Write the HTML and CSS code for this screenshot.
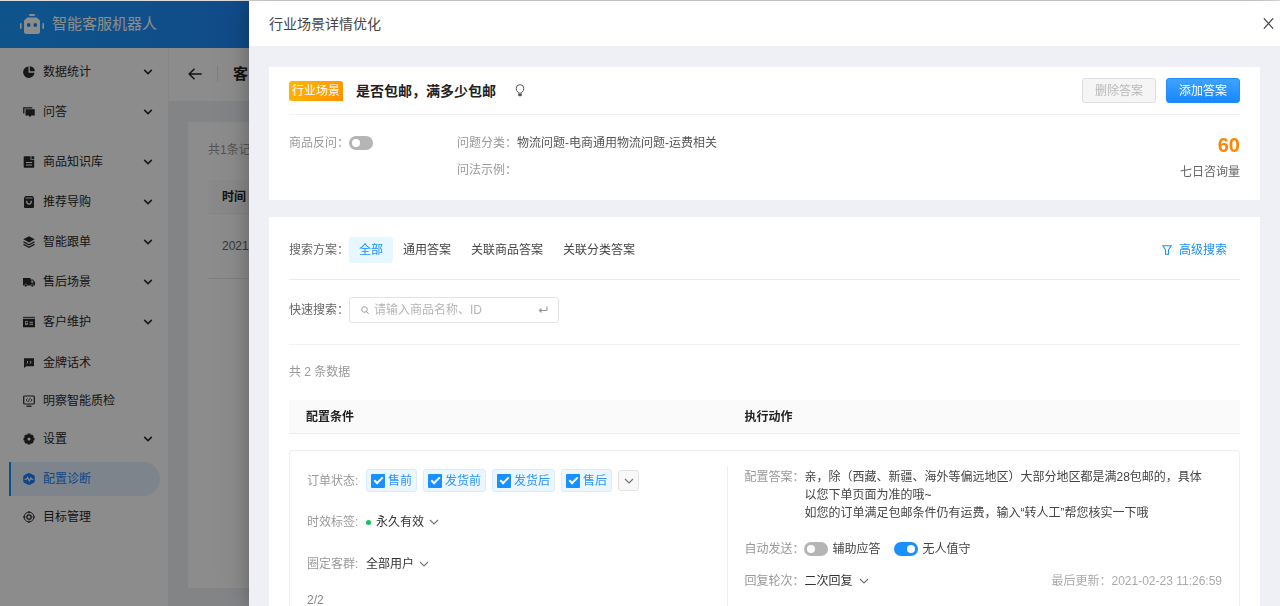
FILE: index.html
```html
<!DOCTYPE html>
<html lang="zh-CN">
<head>
<meta charset="utf-8">
<title>智能客服机器人</title>
<link rel="stylesheet" href="styles.css">
</head>
<body>
<svg class="symbols" aria-hidden="true">
  <symbol id="chevron" viewBox="0 0 10 6"><path d="M1 1l4 4 4-4" fill="none" stroke="currentColor" stroke-width="1.2"/></symbol>
  <symbol id="chevron-bold" viewBox="0 0 10 6"><path d="M1.2 .9L5 4.6 8.8.9" fill="none" stroke="currentColor" stroke-width="1.5"/></symbol>
</svg>
<div class="app">
  <header class="topbar">
    <svg class="logo" viewBox="0 0 24 20" aria-hidden="true"><g fill="#fff"><rect x="9" y="0" width="6" height="2" rx="1"/><rect x="6" y="3.500" width="12" height="3" rx="1.500"/><rect x="4" y="5" width="16" height="15" rx="2.500"/><rect x="0" y="9" width="1.600" height="6" rx=".8"/><rect x="22.400" y="9" width="1.600" height="6" rx=".8"/></g><circle cx="8.700" cy="11" r="1.900" fill="#1b8cf5"/><circle cx="15.300" cy="11" r="1.900" fill="#1b8cf5"/></svg>
    <span class="brand">智能客服机器人</span>
  </header>
  <div class="shell">
    <nav class="sidebar">
      <div class="nav-group">
        <a class="nav-item" href="#"><svg viewBox="0 0 12 12"><path d="M5.500.5A5.700 5.700 0 1 0 11.500 6.700H5.500z" fill="currentColor"/><path d="M6.800.3v5h5A5.300 5.300 0 0 0 6.800.3z" fill="currentColor"/></svg><span>数据统计</span><svg class="caret"><use href="#chevron-bold"/></svg></a>
        <a class="nav-item" href="#"><svg viewBox="0 0 12 12"><path d="M.8 7.500V1.800h8.500" fill="none" stroke="currentColor" stroke-width="1.300"/><path d="M2.500 3.200h9.200v6.300H8.200L7 11.300 5.800 9.500H2.500z" fill="currentColor"/></svg><span>问答</span><svg class="caret"><use href="#chevron-bold"/></svg></a>
      </div>
      <div class="nav-group">
        <a class="nav-item" href="#"><svg viewBox="0 0 12 12"><path fill-rule="evenodd" d="M1.500.2h6v3.600h3.700V11q0 .8-.8.8H1.500q-.8 0-.8-.8V1q0-.8.800-.8zM3 6v1h6V6zm0 2.500v1h6v-1z" fill="currentColor"/><path d="M8.400.2h2q.8 0 .8.8v2H8.400z" fill="currentColor"/></svg><span>商品知识库</span><svg class="caret"><use href="#chevron-bold"/></svg></a>
        <a class="nav-item" href="#"><svg viewBox="0 0 12 12"><path d="M2.300.1h7.400l1.300 2v9q0 .8-.8.800H1.800q-.8 0-.8-.8v-9z" fill="currentColor"/><path d="M2.500 2h7" stroke="#fff" stroke-width=".9"/><path d="M3.700 4.800q0 3.400 2.300 3.400t2.300-3.400" fill="none" stroke="#fff" stroke-width="1.300"/></svg><span>推荐导购</span><svg class="caret"><use href="#chevron-bold"/></svg></a>
        <a class="nav-item" href="#"><svg viewBox="0 0 12 12"><path d="M6 .2l5.700 3.100L6 6.400.3 3.300z" fill="currentColor"/><path d="M.5 5.900L6 8.800l5.500-2.900M.5 8.400L6 11.300l5.500-2.900" fill="none" stroke="currentColor" stroke-width="1.200"/></svg><span>智能跟单</span><svg class="caret"><use href="#chevron-bold"/></svg></a>
        <a class="nav-item" href="#"><svg viewBox="0 0 12 12"><path fill-rule="evenodd" d="M0 2h7.500v1.500h2.400L12 6v3.500H0zM8.300 4.500v2h2.500L9.500 4.500z" fill="currentColor"/><circle cx="2.800" cy="9.500" r="1.400" fill="currentColor" stroke="#fff" stroke-width=".5"/><circle cx="9.300" cy="9.500" r="1.400" fill="currentColor" stroke="#fff" stroke-width=".5"/></svg><span>售后场景</span><svg class="caret"><use href="#chevron-bold"/></svg></a>
        <a class="nav-item" href="#"><svg viewBox="0 0 12 12"><path d="M0 .8h12v1.500H0z" fill="currentColor" opacity=".8"/><path fill-rule="evenodd" d="M0 3h12v8.300H0zM2 5v3.700h3V5zm4.500.7v1H10v-1zm0 2v1H10v-1z" fill="currentColor"/><circle cx="3.600" cy="6.500" r="1.100" fill="currentColor"/></svg><span>客户维护</span><svg class="caret"><use href="#chevron-bold"/></svg></a>
      </div>
      <div class="nav-group">
        <a class="nav-item" href="#"><svg viewBox="0 0 12 12"><path d="M1 1.300h10v8H3.200L1 11z" fill="currentColor"/><path d="M4.500 4v1.500q0 1-.8 1.200M7.700 4v1.500q0 1-.8 1.200" fill="none" stroke="#fff"/></svg><span>金牌话术</span></a>
        <a class="nav-item short" href="#"><svg viewBox="0 0 12 12"><rect x=".7" y="1" width="10.600" height="8" rx=".8" fill="none" stroke="currentColor" stroke-width="1.200"/><path d="M3.500 11.200h5" stroke="currentColor" stroke-width="1.300"/><path d="M4.600 3.500L3 5l1.600 1.700M7.400 3.500L9 5 7.400 6.700M6.500 3.300L5.500 6.900" fill="none" stroke="currentColor" stroke-width=".8"/></svg><span>明察智能质检</span></a>
        <a class="nav-item" href="#"><svg viewBox="0 0 12 12"><path fill-rule="evenodd" d="M4.700.5h2.600l.4 1.400 1.400-.4 1.600 1.700-.5 1.300 1.300.4v2.300l-1.300.5.4 1.400L9 10.700l-1.300-.5-.4 1.400H4.700l-.4-1.400-1.400.5-1.700-1.700.5-1.300L.5 7.200V4.900l1.200-.4-.5-1.400 1.700-1.600 1.400.4zM6 4.500a1.500 1.500 0 1 0 0 3 1.500 1.500 0 0 0 0-3z" fill="currentColor"/></svg><span>设置</span><svg class="caret"><use href="#chevron-bold"/></svg></a>
        <a class="nav-item active" href="#" aria-current="page"><svg viewBox="0 0 12 12"><path d="M6 0q.8 0 1.500.5l3.400 1.800q.9.600.9 1.600v4.200q0 1-.9 1.600L7.500 11.500q-1.500.9-3 0L1.100 9.700Q.2 9.100.2 8.100V3.900q0-1 .9-1.600L4.500.5Q5.200 0 6 0z" fill="currentColor"/><path d="M1.500 6.200h2l1-1.700 1.800 3.400 1.500-3 .9 1.300h1.800" fill="none" stroke="#fff" stroke-width="1.100"/></svg><span>配置诊断</span></a>
        <a class="nav-item short" href="#"><svg viewBox="0 0 12 12"><circle cx="6" cy="6" r="4.900" fill="none" stroke="currentColor"/><circle cx="6" cy="6" r="2.200" fill="none" stroke="currentColor" stroke-width="1.300"/><path d="M6 0v2.500M6 9.500V12M0 6h2.500M9.500 6H12" stroke="currentColor"/></svg><span>目标管理</span></a>
      </div>
    </nav>
    <main class="main">
      <div class="page-head">
        <button class="back" aria-label="返回"><svg viewBox="0 0 14 12"><path d="M6.500.7L1.200 6l5.300 5.300M1.200 6h12.500" fill="none" stroke="currentColor" stroke-width="1.500"/></svg></button>
        <h1 class="page-title">客</h1>
      </div>
      <section class="records">
        <p class="records-count">共1条记</p>
        <table class="records-table">
          <thead><tr><th>时间</th></tr></thead>
          <tbody><tr><td>2021-</td></tr></tbody>
        </table>
      </section>
    </main>
  </div>
</div>
<div class="mask"></div>

<aside class="drawer" role="dialog" aria-labelledby="drawer-title">
  <header class="drawer-head">
    <h2 class="drawer-title" id="drawer-title">行业场景详情优化</h2>
    <button class="close" aria-label="关闭"><svg viewBox="0 0 10 10"><path d="M.8.300l8.400 9.400M9.200.300L.8 9.700" fill="none" stroke="currentColor" stroke-width="1.100"/></svg></button>
  </header>
  <div class="drawer-body">
    <section class="card">
      <div class="scene-head">
        <span class="tag">行业场景</span>
        <h3 class="scene-title">是否包邮，满多少包邮</h3>
        <svg class="bulb" viewBox="0 0 9 12" aria-hidden="true"><path d="M3 8.400V7.700Q1 6.500 1 4.200A3.500 3.600 0 0 1 8 4.200Q8 6.500 6 7.700v.7z" fill="none" stroke="currentColor" stroke-width=".9"/><path d="M2.800 9h3.400v1.500l-.9.900H3.700l-.9-.9z" fill="currentColor"/></svg>
        <div class="actions">
          <button class="btn" disabled>删除答案</button>
          <button class="btn primary">添加答案</button>
        </div>
      </div>
      <div class="scene-info">
        <div class="info-ask"><label class="muted" for="ask">商品反问：</label><input class="switch" type="checkbox" role="switch" id="ask"></div>
        <dl class="info-list">
          <div><dt>问题分类：</dt><dd>物流问题-电商通用物流问题-运费相关</dd></div>
          <div><dt>问法示例：</dt><dd></dd></div>
        </dl>
        <div class="stat"><strong>60</strong><span>七日咨询量</span></div>
      </div>
    </section>

    <section class="card">
      <div class="filter-row plans">
        <span class="label">搜索方案：</span>
        <div class="tabs">
          <button class="tab selected">全部</button><button class="tab">通用答案</button><button class="tab">关联商品答案</button><button class="tab">关联分类答案</button>
        </div>
        <a class="advanced" href="#"><svg viewBox="0 0 10 10" aria-hidden="true"><path d="M.8.800h8.400L6.500 4.800v4.400h-3V4.800z" fill="none" stroke="currentColor" stroke-width="1.100"/></svg>高级搜索</a>
      </div>
      <div class="filter-row quick">
        <label class="label" for="quick">快速搜索：</label>
        <div class="search">
          <svg viewBox="0 0 8 8" aria-hidden="true"><circle cx="3.500" cy="3.500" r="2.800" fill="none" stroke="currentColor"/><path d="M5.500 5.500L7.700 7.700" stroke="currentColor"/></svg>
          <input id="quick" type="text" placeholder="请输入商品名称、ID">
          <svg viewBox="0 0 10 8" aria-hidden="true"><path d="M8.900.5v4H2.500" fill="none" stroke="currentColor" stroke-width="1.100"/><path d="M3.500 1.800v5.400L.5 4.500z" fill="currentColor"/></svg>
        </div>
      </div>
      <p class="count">共 2 条数据</p>
      <table class="rules">
        <thead><tr><th>配置条件</th><th>执行动作</th></tr></thead>
        <tbody>
          <tr>
            <td class="cond">
              <div class="field status"><span class="muted">订单状态:</span>
                <div class="chips">
                  <label class="chip"><input type="checkbox" checked>售前</label>
                  <label class="chip"><input type="checkbox" checked>发货前</label>
                  <label class="chip"><input type="checkbox" checked>发货后</label>
                  <label class="chip"><input type="checkbox" checked>售后</label>
                  <button class="more" aria-label="更多"><svg><use href="#chevron"/></svg></button>
                </div>
              </div>
              <div class="field"><label class="muted" for="valid">时效标签:</label><i class="dot"></i><span class="pick"><select id="valid"><option>永久有效</option></select><svg><use href="#chevron"/></svg></span></div>
              <div class="field"><label class="muted" for="crowd">圈定客群:</label><span class="pick"><select id="crowd"><option>全部用户</option></select><svg><use href="#chevron"/></svg></span></div>
              <p class="pager">2/2</p>
            </td>
            <td class="act">
              <div class="act-inner">
                <div class="answer"><span class="muted">配置答案：</span><p>亲，除（西藏、新疆、海外等偏远地区）大部分地区都是满28包邮的，具体<br>以您下单页面为准的哦~<br>如您的订单满足包邮条件仍有运费，输入“转人工”帮您核实一下哦</p></div>
                <div class="send"><span class="muted">自动发送：</span>
                  <label class="toggle"><input class="switch" type="checkbox" role="switch">辅助应答</label>
                  <label class="toggle"><input class="switch" type="checkbox" role="switch" checked>无人值守</label>
                </div>
                <div class="round"><label class="muted" for="round">回复轮次：</label><span class="pick wide"><select id="round"><option>二次回复</option></select><svg><use href="#chevron"/></svg></span><time class="updated">最后更新：2021-02-23 11:26:59</time></div>
              </div>
            </td>
          </tr>
        </tbody>
      </table>
    </section>
  </div>
</aside>
</body>
</html>
```
FILE: styles.css
```css
* { box-sizing: border-box; }

body {
  margin: 0;
  overflow: hidden;
  font: 12px/18px "Liberation Sans", "Noto Sans CJK SC", sans-serif;
  color: #444;
}

h1, h2, h3, p, dl, dd { margin: 0; }
h1, h2, h3 { font-size: 14px; line-height: 20px; }
a { color: inherit; text-decoration: none; }
button, input, select { font: inherit; color: inherit; }
button { padding: 0; border: 0; background: none; cursor: pointer; }
table { border-collapse: separate; border-spacing: 0; width: 100%; }
th { text-align: left; }
svg { display: block; flex: none; }
.symbols { position: absolute; width: 0; height: 0; }
.muted { color: #999; white-space: nowrap; }

/* application behind the drawer */
.app {
  display: flex;
  flex-direction: column;
  height: 100vh;
  border-top: 1px solid #dcdcdc;
}
.topbar {
  display: flex;
  flex: none;
  align-items: center;
  gap: 8px;
  height: 47px;
  padding: 0 20px 2px;
  background: linear-gradient(90deg, #1b9aff, #1f88f8 20%);
  color: #fff;
}
.logo { width: 24px; height: 20px; }
.brand { font-size: 15px; line-height: 24px; }
.shell { display: flex; flex: 1; min-height: 0; }

.sidebar {
  display: flex;
  flex: none;
  flex-direction: column;
  width: 168px;
  padding-top: 4px;
  background: #fff;
  color: #2a2a2a;
}
.nav-group:nth-child(2) { padding: 10px 0 1px; }
.nav-item {
  display: flex;
  align-items: center;
  gap: 8px;
  height: 40px;
  padding: 0 15px 0 23px;
}
.nav-item svg { width: 12px; height: 12px; }
.nav-item .caret { width: 10px; height: 6px; margin-left: auto; }
.nav-item.short { height: 36px; }
.nav-item.active {
  height: 34px;
  margin: 3px 8px 3px 9px;
  padding-left: 12px;
  border-left: 2px solid #1890ff;
  border-radius: 0 17px 17px 0;
  background: #e3f0ff;
  color: #1f80f5;
}

.main {
  display: flex;
  flex: 1;
  flex-direction: column;
  background: #eff1f5;
}
.page-head {
  display: flex;
  flex: none;
  align-items: center;
  height: 53px;
  padding: 0 0 2px 19px;
  background: #fff;
  border-left: 1px solid #f5f5f5;
  color: #222;
}
.back { padding-right: 15px; border-right: 1px solid #e8e8e8; }
.back svg { width: 14px; height: 16px; }
.page-title { padding-left: 15px; font-size: 15px; }
.records {
  flex: 1;
  margin: 21px 20px 18px;
  padding: 19px 20px;
  background: #fff;
}
.records-count { color: #999; }
.records-table { margin-top: 21px; }
.records-table th {
  height: 34px;
  padding: 0 14px;
  border-bottom: 1px solid #eee;
  background: #fafafa;
  color: #222;
}
.records-table td {
  height: 65px;
  padding: 0 14px;
  border-bottom: 1px solid #eaeaea;
  color: #666;
}

.mask {
  position: fixed;
  inset: 1px 0 0;
  background: rgba(0, 0, 0, .45);
}

/* drawer */
.drawer {
  position: fixed;
  inset: 1px 0 0 249px;
  background: #eff0f5;
  box-shadow: -4px 0 14px rgba(0, 0, 0, .16), -8px 0 36px rgba(0, 0, 0, .1);
}
.drawer-head {
  display: flex;
  align-items: center;
  justify-content: space-between;
  height: 45px;
  padding: 0 6px 0 20px;
  background: #fff;
}
.drawer-title { font-weight: 400; color: #444; }
.close { color: #444; }
.close svg { width: 11px; height: 11px; }
.drawer-body {
  display: flex;
  flex-direction: column;
  gap: 17px;
  height: calc(100% - 45px);
  padding: 21px 20px 0;
  overflow: hidden;
}
.card { flex: none; padding: 0 20px; background: #fff; }

.scene-head {
  display: flex;
  align-items: center;
  height: 48px;
  border-bottom: 1px solid #f2f2f2;
}
.tag {
  padding: 1px 3px;
  border-radius: 3px 3px 0 3px;
  background: linear-gradient(120deg, #ffb800, #ff9000);
  color: #fff;
}
.scene-title { margin-left: 13px; color: #222; }
.bulb { width: 10px; height: 13px; margin-left: 19px; color: #555; }
.actions { display: flex; gap: 10px; margin-left: auto; }
.btn {
  height: 25px;
  padding: 0 12px;
  border: 1px solid #dedede;
  border-radius: 3px;
  background: #f5f5f5;
}
.btn:disabled { color: #b8b8b8; cursor: default; }
.btn.primary {
  border-color: #1f8cff;
  background: linear-gradient(#40a2ff, #1688ff);
  color: #fff;
}

.scene-info { display: flex; height: 85px; padding-top: 19px; }
.info-ask { display: flex; align-items: center; height: 18px; width: 168px; }
.info-list { flex: 1; color: #555; }
.info-list div { display: flex; height: 27px; }
.info-list dt { color: #999; }
.stat { display: flex; flex-direction: column; align-items: flex-end; gap: 7px; color: #666; }
.stat strong { color: #ff8500; font-size: 20px; line-height: 22px; }

.switch {
  appearance: none;
  flex: none;
  display: flex;
  align-items: center;
  width: 24px;
  height: 14px;
  margin: 0;
  padding: 3px;
  border-radius: 7px;
  background: #b5b5b5;
}
.switch::before {
  content: "";
  width: 8px;
  height: 8px;
  border-radius: 50%;
  background: #fff;
}
.switch:checked { justify-content: flex-end; background: #1890ff; }

.filter-row { display: flex; align-items: center; height: 65px; border-bottom: 1px solid #f2f2f2; }
.plans { height: 63px; padding-top: 3px; border-color: #ebebeb; }
.quick { padding-bottom: 4px; }
.label { color: #666; }
.tabs { display: flex; }
.tab { height: 26px; padding: 0 10px; border-radius: 3px; color: #444; }
.tab.selected { background: #e6f7ff; color: #1890ff; }
.advanced { display: flex; align-items: center; gap: 7px; margin: 0 13px 0 auto; color: #1890ff; }
.advanced svg { width: 10px; height: 10px; }
.search {
  display: flex;
  align-items: center;
  gap: 5px;
  width: 210px;
  height: 26px;
  padding: 0 10px 0 11px;
  border: 1px solid #e3e3e3;
  border-radius: 3px;
  color: #999;
}
.search svg { width: 8px; height: 8px; }
.search svg:last-child { width: 10px; }
.search input { flex: 1; min-width: 0; padding: 0; border: 0; outline: 0; background: none; }
.search input::placeholder { color: #b5b5b5; }
.count { padding: 18px 0 19px; color: #999; }

.rules { table-layout: fixed; }
.rules th {
  height: 34px;
  padding: 0 16px 0 18px;
  border-bottom: 1px solid #eee;
  background: #fafafa;
  color: #222;
}
.rules th:first-child { width: 46%; padding-left: 17px; }
.rules tbody::before { content: ""; display: block; height: 16px; }
.rules td { padding: 14px 17px 20px; vertical-align: top; border: solid #eee; }
.rules .cond { border-width: 1px 0 1px 1px; border-radius: 4px 0 0 4px; }
.rules .act { padding-top: 15px; padding-left: 1px; border-width: 1px 1px 1px 0; border-radius: 0 4px 4px 0; }

.field { display: flex; align-items: center; height: 42px; }
.field .muted { width: 59px; }
.field.status { height: 36px; padding-bottom: 5px; }
.chips { display: flex; align-items: center; gap: 6px; }
.chip {
  display: flex;
  align-items: center;
  gap: 3px;
  height: 23px;
  padding: 0 4px;
  border: 1px solid #d9ecff;
  border-radius: 3px;
  background: #ecf6ff;
  color: #2b95ff;
  white-space: nowrap;
}
.chip input {
  appearance: none;
  display: grid;
  place-items: center;
  width: 14px;
  height: 14px;
  margin: 0;
  border-radius: 1px;
  background: #fff;
}
.chip input:checked { background: #1890ff; }
.chip input:checked::before {
  content: "";
  box-sizing: border-box;
  width: 9px;
  height: 5px;
  margin-bottom: 3px;
  border: solid #fff;
  border-width: 0 0 2px 2px;
  rotate: -45deg;
}
.more {
  display: grid;
  place-items: center;
  width: 21px;
  height: 21px;
  border: 1px solid #e3e3e3;
  border-radius: 3px;
  background: #f8f8f8;
  color: #777;
}
.more svg, .pick svg { width: 10px; height: 6px; }
.dot { width: 5px; height: 5px; margin-right: 5px; border-radius: 50%; background: #12c25b; }
.pick { position: relative; display: flex; align-items: center; color: #333; }
.pick select {
  appearance: none;
  height: 20px;
  padding: 0 14px 0 0;
  border: 0;
  background: none;
}
.pick svg { position: absolute; right: 0; color: #777; pointer-events: none; }
.pick.wide select { padding-right: 16px; }
.pager { padding-top: 8px; line-height: 14px; color: #888; }

.act-inner { min-height: 150px; padding-left: 16px; border-left: 1px solid #eee; }
.answer, .send, .round { display: flex; }
.answer { color: #444; padding-top: 2px; }
.send { align-items: center; gap: 14px; padding: 18px 0 13px; }
.send .muted { margin-right: -14px; }
.toggle { display: flex; align-items: center; gap: 4px; white-space: nowrap; }
.round { align-items: center; }
.updated { margin-left: auto; color: #aaa; }
```
